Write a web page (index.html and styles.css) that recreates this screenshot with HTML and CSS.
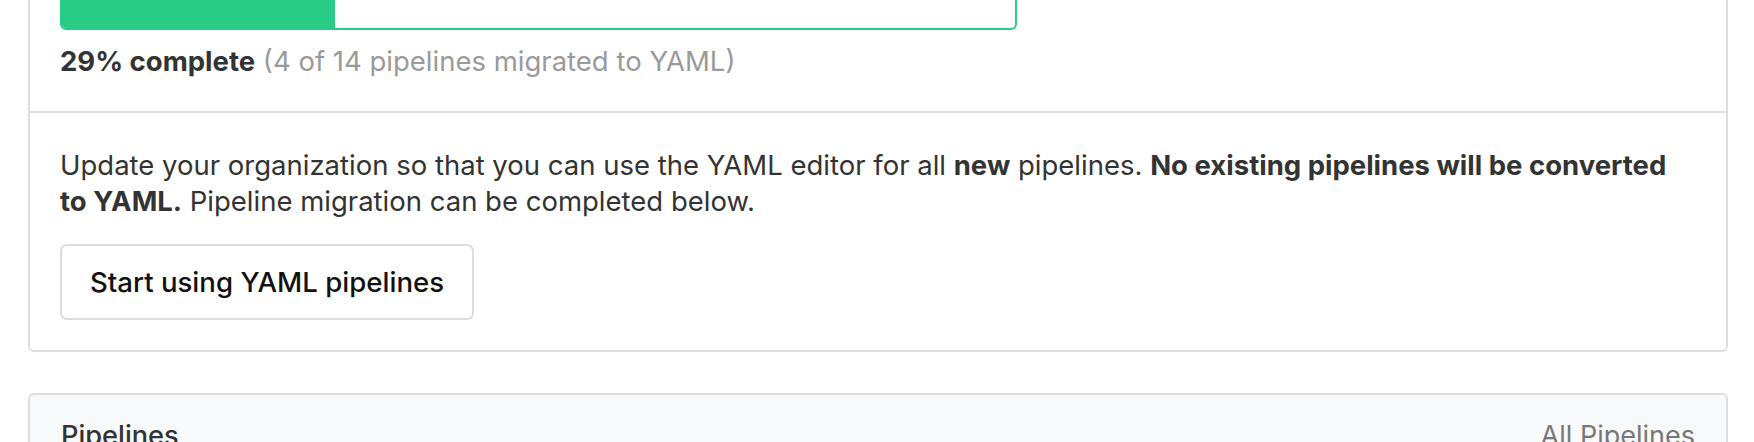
FILE: index.html
```html
<!DOCTYPE html>
<html lang="en">
<head>
<meta charset="utf-8">
<title>YAML migration</title>
<link rel="stylesheet" href="styles.css">
</head>
<body>
<main class="page">
  <section class="card">
    <div class="card-section migration">
      <div class="progress">
        <div class="progress-fill" style="width: 28.6%"></div>
      </div>
      <p class="progress-label"><strong>29% complete</strong> <span class="muted">(4 of 14 pipelines migrated to YAML)</span></p>
    </div>
    <div class="card-section">
      <p class="description">Update your organization so that you can use the YAML editor for all <strong>new</strong> pipelines. <strong>No existing pipelines will be converted to YAML.</strong> Pipeline migration can be completed below.</p>
      <button class="btn" type="button">Start using YAML pipelines</button>
    </div>
  </section>

  <section class="card list-card">
    <header class="list-header">
      <h2 class="list-title">Pipelines</h2>
      <span class="list-filter">All Pipelines</span>
    </header>
  </section>
</main>
</body>
</html>
```

FILE: styles.css
```css
* {
  box-sizing: border-box;
}

html, body {
  margin: 0;
  padding: 0;
  background: #ffffff;
}

body {
  font-family: "Inter", "Noto Sans", sans-serif;
  font-size: 27.5px;
  line-height: 36px;
  color: #333333;
}

.page {
  display: flex;
  flex-direction: column;
  gap: 41px;
  padding: 0 26px 0 28px;
  margin-top: -48px;
}

.card {
  border: 2px solid #dedede;
  border-radius: 6px;
  background: #ffffff;
}

.card-section {
  padding: 34px 40px 30px 30px;
}

.card-section + .card-section {
  border-top: 2px solid #e2e2e2;
}

.migration {
  padding-top: 32px;
  padding-bottom: 32px;
}

.progress {
  width: 957px;
  height: 44px;
  border: 2px solid #29cb87;
  border-radius: 6px;
  overflow: hidden;
  background: #ffffff;
}

.progress-fill {
  height: 100%;
  background: #29cb87;
}

.progress-label {
  margin: 13px 0 0 0;
}

.progress-label strong {
  font-weight: 700;
  color: #333333;
}

.muted {
  color: #9a9a9a;
}

.description {
  margin: 0 0 25px 0;
}

.description strong {
  font-weight: 700;
}

.btn {
  display: inline-flex;
  align-items: center;
  height: 76px;
  padding: 0 28px;
  border: 2px solid #dddddd;
  border-radius: 7px;
  background: #ffffff;
  font-family: inherit;
  font-size: 27.6px;
  font-weight: 500;
  color: #111111;
  line-height: 36px;
}

.list-card {
  background: #f8f9fa;
}

.list-header {
  display: flex;
  justify-content: space-between;
  align-items: baseline;
  padding: 23px 31px 20px 31px;
}

.list-title {
  margin: 0;
  font-size: 27.2px;
  font-weight: 500;
  color: #333333;
}

.list-filter {
  font-size: 27px;
  color: #777777;
}
```
